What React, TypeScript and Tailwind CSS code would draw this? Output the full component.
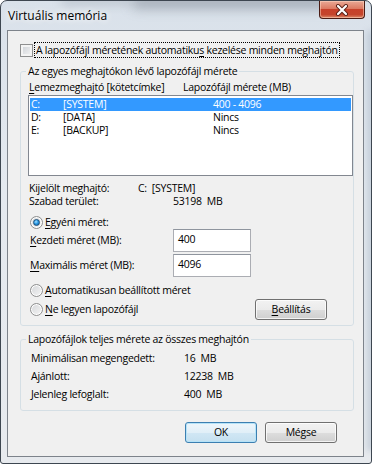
import React from "react";

function Ul({ children }: { children: React.ReactNode }) {
  return <span className="underline underline-offset-[2px] decoration-[1px]">{children}</span>;
}

function Radio({ checked }: { checked?: boolean }) {
  return (
    <span className="flex h-[13px] w-[13px] shrink-0 items-center justify-center rounded-full border border-[#8e8f8f] bg-[linear-gradient(135deg,#d4d6d9_0%,#f5f5f5_100%)] shadow-[inset_0_0_0_1px_#ffffff]">
      {checked && (
        <span className="h-[7px] w-[7px] rounded-full border border-[#1c4f7a] bg-[radial-gradient(circle_at_40%_35%,#a6e0ff_0%,#2a9ae5_45%,#0f5a9c_100%)]" />
      )}
    </span>
  );
}

function Button({ children, primary }: { children: React.ReactNode; primary?: boolean }) {
  return (
    <div
      className={`flex h-[21px] w-[72px] items-center justify-center rounded-[3px] border ${
        primary
          ? "border-[#3c7fb1] bg-[linear-gradient(to_bottom,#eef6fb_0%,#e1eff8_50%,#d1e7f4_51%,#c5e0f0_100%)] shadow-[inset_0_0_0_1px_#b6e3f8]"
          : "border-[#707070] bg-[linear-gradient(to_bottom,#f2f2f2_0%,#ebebeb_50%,#dddddd_51%,#cfcfcf_100%)] shadow-[inset_0_0_0_1px_rgba(255,255,255,0.75)]"
      }`}
    >
      {children}
    </div>
  );
}

const drives = [
  { letter: "C:", label: "[SYSTEM]", size: "400 - 4096", selected: true },
  { letter: "D:", label: "[DATA]", size: "Nincs" },
  { letter: "E:", label: "[BACKUP]", size: "Nincs" },
];

export default function App() {
  return (
    <div className="h-[464px] w-[372px] whitespace-nowrap bg-white font-['Open_Sans',sans-serif] text-[10.5px] leading-[13px] tracking-[-0.25px] text-black">
      <div className="relative flex h-[464px] w-[372px] flex-col overflow-hidden rounded-t-[7px] rounded-b-[3px] border border-[#3d4650] bg-[linear-gradient(to_bottom,#d9e1ea_0%,#e4e9ef_40%,#e7eaee_100%)]">
        {/* blurred glass background */}
        <div className="absolute left-[130px] top-[-6px] h-[14px] w-[200px] rounded-full bg-[#5b6470]/40 blur-[6px]" />
        <div className="absolute left-[60px] top-[-4px] h-[8px] w-[70px] rounded-full bg-[#7c8590]/30 blur-[5px]" />
        <div className="absolute right-[-4px] top-[30px] h-[420px] w-[8px] bg-[#aebccb]/60 blur-[3px]" />

        <div className="relative flex h-[29px] shrink-0 items-start justify-between">
          <div className="ml-[7px] mt-[8px] text-[12px] leading-[14px] tracking-normal [text-shadow:0_0_6px_#ffffff,0_0_10px_#ffffff]">
            Virtuális memória
          </div>
          <div className="mr-[6px] flex h-[18px] w-[46px] items-center justify-center rounded-b-[4px] border border-t-0 border-[#4a1c14] bg-[linear-gradient(to_bottom,#e9a996_0%,#dc7a62_45%,#c7412a_50%,#c4452c_80%,#dc8a6a_100%)] shadow-[inset_0_0_0_1px_rgba(255,220,200,0.5)]">
            <svg width="14" height="12" viewBox="0 0 14 12">
              <path d="M3 2 L11 10 M11 2 L3 10" stroke="#5a2218" strokeWidth="4" strokeLinecap="round" />
              <path d="M3 2 L11 10 M11 2 L3 10" stroke="#ffffff" strokeWidth="2.2" strokeLinecap="round" />
            </svg>
          </div>
        </div>

        <div className="relative mb-[6px] ml-[6px] mr-[7px] flex flex-1 flex-col border border-[#7d838b] bg-[#f0f0f0]">
          {/* auto checkbox */}
          <div className="ml-[12px] mt-[11px] flex h-[16px] items-center">
            <span className="h-[13px] w-[13px] shrink-0 border border-[#8e8f8f] bg-[linear-gradient(135deg,#cbcfd5_0%,#f6f6f6_100%)] shadow-[inset_0_0_0_2px_#f4f4f4]" />
            <span className="ml-[1px] border border-dotted border-black px-[1px] leading-[14px]">
              A lapozófájl méretének automatiku<Ul>s</Ul> kezelése minden meghajtón
            </span>
          </div>

          {/* per-drive group */}
          <fieldset className="ml-[12px] mr-[9px] mt-[7px] rounded-[3px] border border-[#d5dfe5] pb-[5px] pl-[7px] pr-0">
            <legend className="-ml-[2px] px-[2px] leading-[13px]">Az egyes meghajtókon lévő lapozófájl mérete</legend>
            <div className="mt-[3px] flex h-[13px]">
              <span className="ml-[1px] w-[154px]">
                <Ul>L</Ul>emezmeghajtó [kötetcímke]
              </span>
              <span>Lapozófájl mérete (MB)</span>
            </div>
            <div className="mt-[1px] h-[81px] border border-[#828790] bg-white pt-[2px]">
              {drives.map((d) => (
                <div
                  key={d.letter}
                  className={`mx-[1px] flex h-[13px] pl-[1px] ${d.selected ? "bg-[#3399ff] text-white" : ""}`}
                >
                  <span className="w-[32px]">{d.letter}</span>
                  <span className="w-[150px]">{d.label}</span>
                  <span>{d.size}</span>
                </div>
              ))}
            </div>

            <div className="ml-[1px] mt-[6px] flex">
              <span className="w-[109px]">Kijelölt meghajtó:</span>
              <span>C:&nbsp;&nbsp;[SYSTEM]</span>
            </div>
            <div className="ml-[1px] flex">
              <span className="w-[144px]">Szabad terület:</span>
              <span>53198&nbsp;&nbsp;MB</span>
            </div>

            <div className="ml-[2px] mt-[8px] flex h-[13px] items-center gap-[2px]">
              <Radio checked />
              <span>
                <Ul>E</Ul>gyéni méret:
              </span>
            </div>
            <div className="ml-[2px] flex h-[23px] items-center">
              <span className="w-[143px]">
                <Ul>K</Ul>ezdeti méret (MB):
              </span>
              <div className="h-[23px] w-[78px] border border-[#abadb3] border-t-[#8f959e] bg-white pl-[4px] pt-[3px]">400</div>
            </div>
            <div className="ml-[2px] mt-[2px] flex h-[23px] items-center">
              <span className="w-[143px]">
                <Ul>M</Ul>aximális méret (MB):
              </span>
              <div className="h-[23px] w-[78px] border border-[#abadb3] border-t-[#8f959e] bg-white pl-[4px] pt-[3px]">4096</div>
            </div>

            <div className="ml-[2px] mt-[7px] flex h-[13px] items-center gap-[2px]">
              <Radio />
              <span>
                <Ul>A</Ul>utomatikusan beállított méret
              </span>
            </div>
            <div className="mt-[2px] flex h-[21px] items-center">
              <div className="ml-[2px] flex w-[225px] items-center gap-[2px]">
                <Radio />
                <span>
                  <Ul>N</Ul>e legyen lapozófájl
                </span>
              </div>
              <Button>
                <span>
                  <Ul>B</Ul>eállítás
                </span>
              </Button>
            </div>
          </fieldset>

          {/* totals group */}
          <fieldset className="ml-[12px] mr-[9px] mt-[7px] rounded-[3px] border border-[#d5dfe5] pb-[7px] pl-[7px]">
            <legend className="-ml-[2px] px-[2px] leading-[13px]">Lapozófájlok teljes mérete az összes meghajtón</legend>
            <div className="mt-[3px] flex flex-col leading-[18px]">
              <div className="ml-[3px] flex">
                <span className="w-[153px]">Minimálisan megengedett:</span>
                <span>16&nbsp;&nbsp;MB</span>
              </div>
              <div className="ml-[3px] flex">
                <span className="w-[153px]">Ajánlott:</span>
                <span>12238&nbsp;&nbsp;MB</span>
              </div>
              <div className="ml-[3px] flex">
                <span className="w-[153px]">Jelenleg lefoglalt:</span>
                <span>400&nbsp;&nbsp;MB</span>
              </div>
            </div>
          </fieldset>

          <div className="mr-[26px] mt-[11px] flex justify-end gap-[8px]">
            <Button primary>OK</Button>
            <Button>Mégse</Button>
          </div>
        </div>
      </div>
    </div>
  );
}
